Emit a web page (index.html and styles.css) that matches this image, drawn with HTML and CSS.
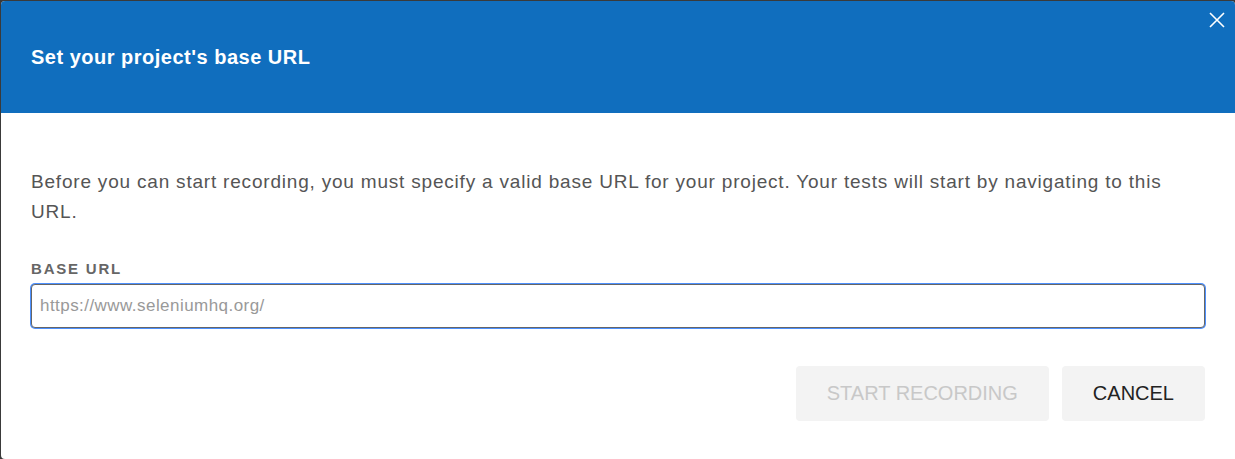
FILE: index.html
```html
<!DOCTYPE html>
<html>
<head>
<meta charset="utf-8">
<link rel="stylesheet" href="styles.css">
</head>
<body>
<div class="dialog">
  <div class="header">
    <h1 class="title">Set your project's base URL</h1>
    <button class="close" aria-label="Close">
      <svg width="16" height="16" viewBox="0 0 16 16"><path d="M1 1 L15 15 M15 1 L1 15" stroke="#fff" stroke-width="1.6" fill="none"/></svg>
    </button>
  </div>
  <div class="content">
    <p class="desc">Before you can start recording, you must specify a valid base URL for your project. Your tests will start by navigating to this URL.</p>
    <label class="label">BASE URL</label>
    <input class="input" type="text" placeholder="https://www.seleniumhq.org/">
    <div class="actions">
      <button class="btn disabled">START RECORDING</button>
      <button class="btn">CANCEL</button>
    </div>
  </div>
</div>
</body>
</html>
```
FILE: styles.css
```css
html, body {
  margin: 0;
  padding: 0;
  background: #3a3a3a;
  font-family: "Liberation Sans", Arial, sans-serif;
}
.dialog {
  margin: 1px 0 0 1px;
  height: 458px;
  background: #fff;
  border-radius: 4px 4px 0 4px;
  overflow: hidden;
}
.header {
  position: relative;
  height: 112px;
  background: #106ebe;
  display: flex;
  align-items: center;
  padding: 0 30px;
}
.title {
  margin: 0;
  color: #fff;
  font-size: 20px;
  letter-spacing: 0.5px;
  font-weight: bold;
}
.close {
  position: absolute;
  top: 11px;
  right: 10px;
  background: none;
  border: 0;
  padding: 0;
  width: 16px;
  height: 16px;
  cursor: pointer;
}
.close svg { display: block; }
.content {
  padding: 0 30px;
  display: flex;
  flex-direction: column;
}
.desc {
  margin: 54px 0 0;
  font-size: 19px;
  letter-spacing: 0.8px;
  line-height: 30px;
  color: #555;
}
.label {
  margin-top: 34px;
  font-size: 15px;
  letter-spacing: 1.8px;
  font-weight: bold;
  color: #666;
  line-height: 16px;
}
.input {
  margin-top: 7px;
  height: 44px;
  box-sizing: border-box;
  border: 1px solid #666;
  border-radius: 4px;
  box-shadow: 0 0 0 1px #4d90fe;
  padding: 0 8px;
  font-family: inherit;
  font-size: 17px;
  letter-spacing: 0.45px;
  color: #333;
  outline: none;
}
.input::placeholder { color: #999; }
.actions {
  margin-top: 38px;
  display: flex;
  justify-content: flex-end;
  gap: 13px;
}
.btn {
  height: 55px;
  border: 0;
  border-radius: 4px;
  background: #f3f3f3;
  font-family: inherit;
  font-size: 20px;
  color: #222;
  padding: 0 31px;
}
.btn.disabled {
  color: #c8c8c8;
}
```
